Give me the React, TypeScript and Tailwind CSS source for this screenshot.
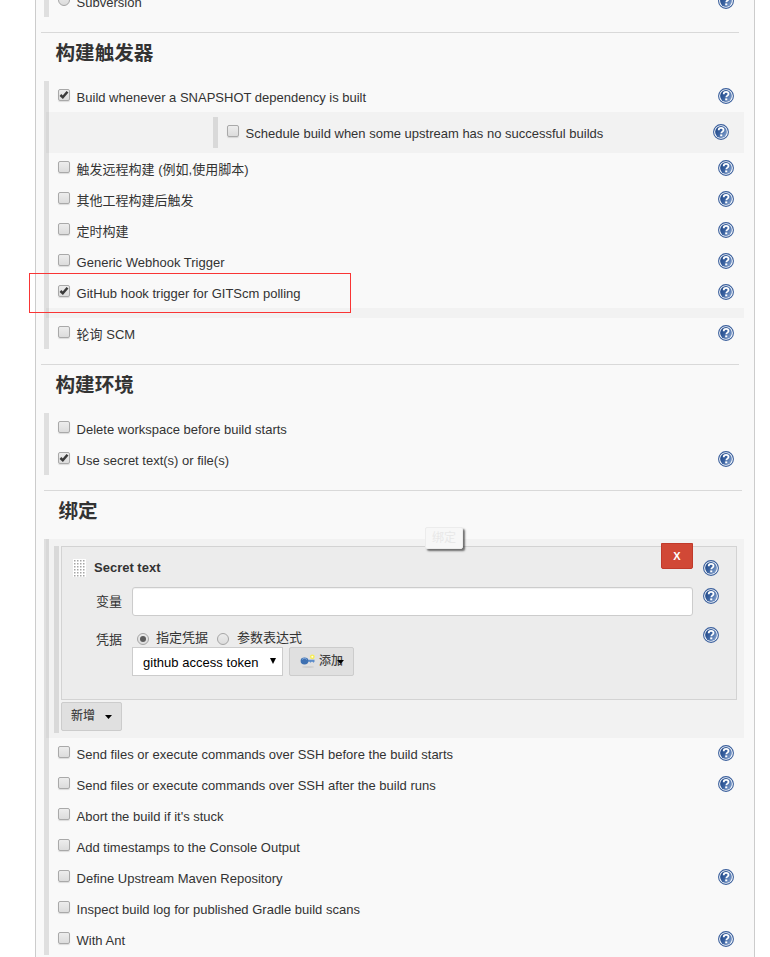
import React from 'react';

function Help({ className = '' }: { className?: string }) {
  return (
    <svg viewBox="0 0 16 16" className={`block h-4 w-4 shrink-0 ${className}`}>
      <defs>
        <linearGradient id="helpFill" x1="0" y1="0.2" x2="1" y2="0.8">
          <stop offset="0" stopColor="#1f4787" />
          <stop offset="0.45" stopColor="#3a62a0" />
          <stop offset="1" stopColor="#86a3cf" />
        </linearGradient>
      </defs>
      <circle cx="8" cy="8" r="7.4" fill="#fff" stroke="#3a5f9c" strokeWidth="1.1" />
      <circle cx="8" cy="8" r="5.9" fill="url(#helpFill)" />
      <path d="M5.7 6.2C5.7 4.6 6.7 3.9 8.1 3.9s2.4.8 2.4 2c0 1.7-2.2 1.7-2.2 3.4" fill="none" stroke="#fff" strokeWidth="1.8" />
      <rect x="7.2" y="10.4" width="2.1" height="1.9" fill="#fff" />
    </svg>
  );
}

function Check({ on = false }: { on?: boolean }) {
  return (
    <span className="block h-3 w-3 shrink-0 rounded-[2px] border border-[#a9a9a9] bg-linear-to-b from-[#ededed] to-[#dcdcdc] shadow-[0_1px_1px_rgba(0,0,0,0.12)]">
      {on && (
        <svg viewBox="0 0 10 10" className="block h-[10px] w-[10px]">
          <path d="M1.4 5 3.8 7.2 8.5 1.7" fill="none" stroke="#3b3b3b" strokeWidth="2.5" />
        </svg>
      )}
    </span>
  );
}

function Radio({ on = false }: { on?: boolean }) {
  return (
    <span className="flex h-3 w-3 shrink-0 items-center justify-center rounded-full border border-[#a5a5a5] bg-linear-to-b from-[#ececec] to-[#dcdcdc]">
      {on && <span className="h-[6px] w-[6px] rounded-full bg-[#5c5c5c]" />}
    </span>
  );
}

type RowProps = { label: string; on?: boolean; help?: boolean; radio?: boolean };

function Row({ label, on, help, radio }: RowProps) {
  return (
    <div className="flex h-[31px] items-start pr-[10px] pl-[9px]">
      <div className="pt-2">{radio ? <Radio /> : <Check on={on} />}</div>
      <span className="ml-[6.6px] flex-1 pt-px leading-[31px] whitespace-nowrap">{label}</span>
      {help && <Help className="mt-[7px]" />}
    </div>
  );
}

function Group({ children }: { children: React.ReactNode }) {
  return <div className="ml-2 w-[700px] border-l-[5px] border-[#dfdfdf]">{children}</div>;
}

function Title({ children, className }: { children: React.ReactNode; className: string }) {
  return <h2 className={`h-12 text-[19.6px] leading-[41px] font-bold ${className}`}>{children}</h2>;
}

const afterRows: RowProps[] = [
  { label: 'Send files or execute commands over SSH before the build starts', help: true },
  { label: 'Send files or execute commands over SSH after the build runs', help: true },
  { label: "Abort the build if it's stuck" },
  { label: 'Add timestamps to the Console Output' },
  { label: 'Define Upstream Maven Repository', help: true },
  { label: 'Inspect build log for published Gradle build scans' },
  { label: 'With Ant', help: true },
];

function SecretText() {
  return (
    <div className="relative h-[154px] w-[676px] border border-[#d3d3d3] bg-[#ececec]">
      <button className="absolute top-[-4px] left-[599px] h-[26px] w-8 rounded-b-[2px] border border-[#c03a2b] bg-[#d14836] text-center text-[11px] leading-[24px] font-bold text-white">
        X
      </button>
      <div className="flex h-10 items-start pr-[17px] pl-[11px]">
        <svg viewBox="0 0 13 18" className="mt-3 h-[18px] w-[13px]">
          <defs>
            <pattern id="grip" width="3" height="3" patternUnits="userSpaceOnUse">
              <rect width="3" height="3" fill="#fff" />
              <rect x="1" y="1" width="1.5" height="1.5" fill="#a5a5a5" />
            </pattern>
          </defs>
          <rect width="13" height="18" fill="url(#grip)" />
        </svg>
        <b className="ml-2 flex-1 pt-px leading-10">Secret text</b>
        <Help className="mt-[13px]" />
      </div>
      <div className="flex h-[45px] items-start pr-[17px]">
        <span className="w-[70px] pl-[34px] leading-[29px]">变量</span>
        <input className="h-[29px] w-[561px] rounded-[3px] border border-[#ccc] bg-white shadow-[inset_0_1px_1px_rgba(0,0,0,0.06)]" />
        <Help className="mt-px ml-[10px]" />
      </div>
      <div className="flex h-[60px] items-start pr-[17px]">
        <span className="w-[70px] pt-[3px] pl-[34px] leading-[10px]">凭据</span>
        <div className="w-[561px]">
          <div className="flex h-[15px] items-start pl-[5px]">
            <div className="pt-px"><Radio on /></div>
            <span className="ml-[7px] w-[53px] leading-[12px]">指定凭据</span>
            <div className="ml-[8px] pt-px"><Radio /></div>
            <span className="ml-[8px] leading-[12px]">参数表达式</span>
          </div>
          <div className="flex gap-[6px]">
            <div className="flex h-[29px] w-[151px] items-start border border-[#ccc] bg-white pl-[10px] text-black">
              <span className="flex-1 pt-px text-[13px] leading-[28px] tracking-[0.03px] whitespace-nowrap">github access token</span>
              <svg viewBox="0 0 7 7" className="mt-[10px] mr-[6px] h-[6px] w-[6px]">
                <path d="M0 0h7L3.5 7z" fill="#000" />
              </svg>
            </div>
            <button className="relative flex h-[29px] w-[65px] items-start rounded-[2px] border border-[#ccc] bg-[#e0e0e0] pl-[10px] text-[12px] font-medium text-[#444]">
              <svg viewBox="0 0 16 16" className="mt-[5px] h-4 w-4">
                <ellipse cx="8" cy="14" rx="6" ry="1" fill="#cfcfcf" />
                <circle cx="12.3" cy="3.8" r="2.4" fill="#f6ec54" />
                <circle cx="12.3" cy="3.8" r="1" fill="#fffde0" />
                <path d="M7 6.8h7.5v2l-1 1-1-1h-1l-1 1-1-1H7z" fill="#5c8cc9" />
                <ellipse cx="4.5" cy="8" rx="3.9" ry="3.4" fill="#3e70b1" />
                <path d="M2 6.6c1-1.6 3.8-1.6 5 0" stroke="#82aadd" fill="none" />
              </svg>
              <span className="ml-[3px] leading-[27px] whitespace-nowrap">添加</span>
              <svg viewBox="0 0 7 4" className="absolute top-[12px] left-[47px] h-1 w-[7px]">
                <path d="M0 0h7L3.5 4z" fill="#000" />
              </svg>
            </button>
          </div>
        </div>
        <Help className="mt-[-5px] ml-[10px]" />
      </div>
    </div>
  );
}

export default function App() {
  return (
    <div className="relative h-[957px] w-[770px] overflow-hidden bg-white font-['Liberation_Sans','Noto_Sans_CJK_SC',sans-serif] text-[13px] text-[#333]">
      <main className="ml-[35px] flex h-[957px] w-[720px] flex-col overflow-hidden border-x border-[#ccc] bg-[#f9f9f9]">
        <div className="-mt-[14px]">
          <Group><Row label="Subversion" radio help /></Group>
        </div>
        <hr className="mt-[15px] ml-[5px] w-[698px] border-[#d9d9d9]" />
        <Title className="pl-[19.5px]">构建触发器</Title>
        <Group>
          <Row label="Build whenever a SNAPSHOT dependency is built" on help />
          <div className="-ml-[3px] h-[41px] bg-black/[0.026] py-[5px] pl-[167px]">
            <div className="flex h-[31px] items-start border-l-[5px] border-[#d9d9d9] pr-[15px] pl-[9px]">
              <div className="pt-2"><Check /></div>
              <span className="ml-[6.6px] flex-1 pt-px leading-[31px]">Schedule build when some upstream has no successful builds</span>
              <Help className="mt-[7px]" />
            </div>
          </div>
          <Row label="触发远程构建 (例如,使用脚本)" help />
          <Row label="其他工程构建后触发" help />
          <Row label="定时构建" help />
          <Row label="Generic Webhook Trigger" help />
          <Row label="GitHub hook trigger for GITScm polling" on help />
          <div className="-ml-[3px] h-[10px] bg-black/[0.026]" />
          <Row label="轮询 SCM" help />
        </Group>
        <hr className="mt-[15px] ml-[5px] w-[698px] border-[#d9d9d9]" />
        <Title className="pl-[19.5px]">构建环境</Title>
        <Group>
          <Row label="Delete workspace before build starts" />
          <Row label="Use secret text(s) or file(s)" on help />
        </Group>
        <hr className="mt-[15px] ml-2 w-[698px] border-[#d9d9d9]" />
        <Title className="pl-[22.5px]">绑定</Title>
        <Group>
          <div className="-ml-[3px] h-[199px] bg-black/[0.026] pt-[7px] pl-2">
            <div className="h-[187px] border-l-[5px] border-[#d9d9d9] pl-[2px]">
              <SecretText />
              <button className="mt-[2px] flex h-[29px] w-[61px] items-start rounded-[2px] border border-[#ccc] bg-[#e0e0e0] pl-[9px] text-[12px] font-medium text-[#444]">
                <span className="leading-[27px]">新增</span>
                <svg viewBox="0 0 7 4" className="mt-[12px] ml-[10px] h-1 w-[7px]">
                  <path d="M0 0h7L3.5 4z" fill="#000" />
                </svg>
              </button>
            </div>
          </div>
          {afterRows.map((r) => <Row key={r.label} {...r} />)}
        </Group>
      </main>
      <div className="absolute top-[273px] left-[29px] h-10 w-[322px] border border-[#f93535]" />
      <div className="absolute top-[527px] left-[425px] h-[22px] w-[38px] rounded-[2px] border border-[#ececec] bg-[#f7f7f7] text-center text-[12px] leading-[20px] text-[#e8e8e8] shadow-[2px_2px_2px_rgba(0,0,0,0.55)]">
        绑定
      </div>
    </div>
  );
}
